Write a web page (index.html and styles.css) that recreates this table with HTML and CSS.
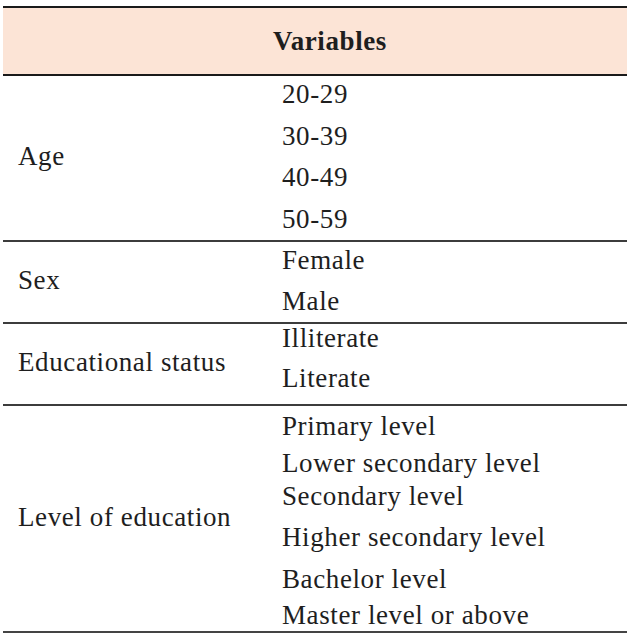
FILE: index.html
```html
<!DOCTYPE html>
<html lang="en">
<head>
<meta charset="utf-8">
<title>Variables</title>
<link rel="stylesheet" href="styles.css">
</head>
<body>
<div class="table">
  <div class="head">Variables</div>

  <div class="group group-age">
    <div class="label">Age</div>
    <div class="values">
      <div class="val">20-29</div>
      <div class="val">30-39</div>
      <div class="val">40-49</div>
      <div class="val">50-59</div>
    </div>
  </div>

  <div class="group group-sex">
    <div class="label">Sex</div>
    <div class="values indent">
      <div class="val">Female</div>
      <div class="val">Male</div>
    </div>
  </div>

  <div class="group group-edu">
    <div class="label">Educational status</div>
    <div class="values">
      <div class="val">Illiterate</div>
      <div class="val">Literate</div>
    </div>
  </div>

  <div class="group group-level">
    <div class="label">Level of education</div>
    <div class="values">
      <div class="val">Primary level</div>
      <div class="val gap-a">Lower secondary level</div>
      <div class="val gap-b">Secondary level</div>
      <div class="val gap-c">Higher secondary level</div>
      <div class="val gap-c">Bachelor level</div>
      <div class="val gap-d">Master level or above</div>
    </div>
  </div>
</div>
</body>
</html>
```

FILE: styles.css
```css
html, body {
  margin: 0;
  padding: 0;
  background: #ffffff;
}

body {
  font-family: "Liberation Serif", "Times New Roman", serif;
  font-size: 27px;
  letter-spacing: 0.6px;
  color: #1e1e1e;
}

.table {
  margin: 6px 0 0 3px;
  width: 624px;
}

.head {
  box-sizing: border-box;
  height: 70px;
  border-top: 2px solid #1a1a1a;
  border-bottom: 2px solid #1a1a1a;
  background: #fce4d6;
  display: flex;
  align-items: center;
  justify-content: center;
  padding-left: 30px;
  font-weight: bold;
  line-height: 28px;
}

.group {
  display: grid;
  grid-template-columns: 279px 1fr;
  border-bottom: 2px solid #3c3c3c;
}

.group-level {
  border-bottom-color: #444444;
}

.label {
  align-self: center;
  padding-left: 15px;
  padding-bottom: 3px;
  line-height: 28px;
  white-space: nowrap;
}

.values {
  display: flex;
  flex-direction: column;
}

.val {
  line-height: 28px;
  height: 28px;
  white-space: nowrap;
}

.indent {
  padding-left: 7px;
}

.group-age .values {
  padding: 4px 0 7px;
  gap: 13.67px;
}

.group-sex .values {
  padding: 4px 0 7px;
  gap: 12.6px;
}

.group-edu .values {
  padding: 0 0 12px;
  gap: 12px;
}

.group-level .values {
  padding: 6px 0 2px;
}

.gap-a { margin-top: 9.7px; }
.gap-b { margin-top: 4.3px; }
.gap-c { margin-top: 13.7px; }
.gap-d { margin-top: 8px; }
```
